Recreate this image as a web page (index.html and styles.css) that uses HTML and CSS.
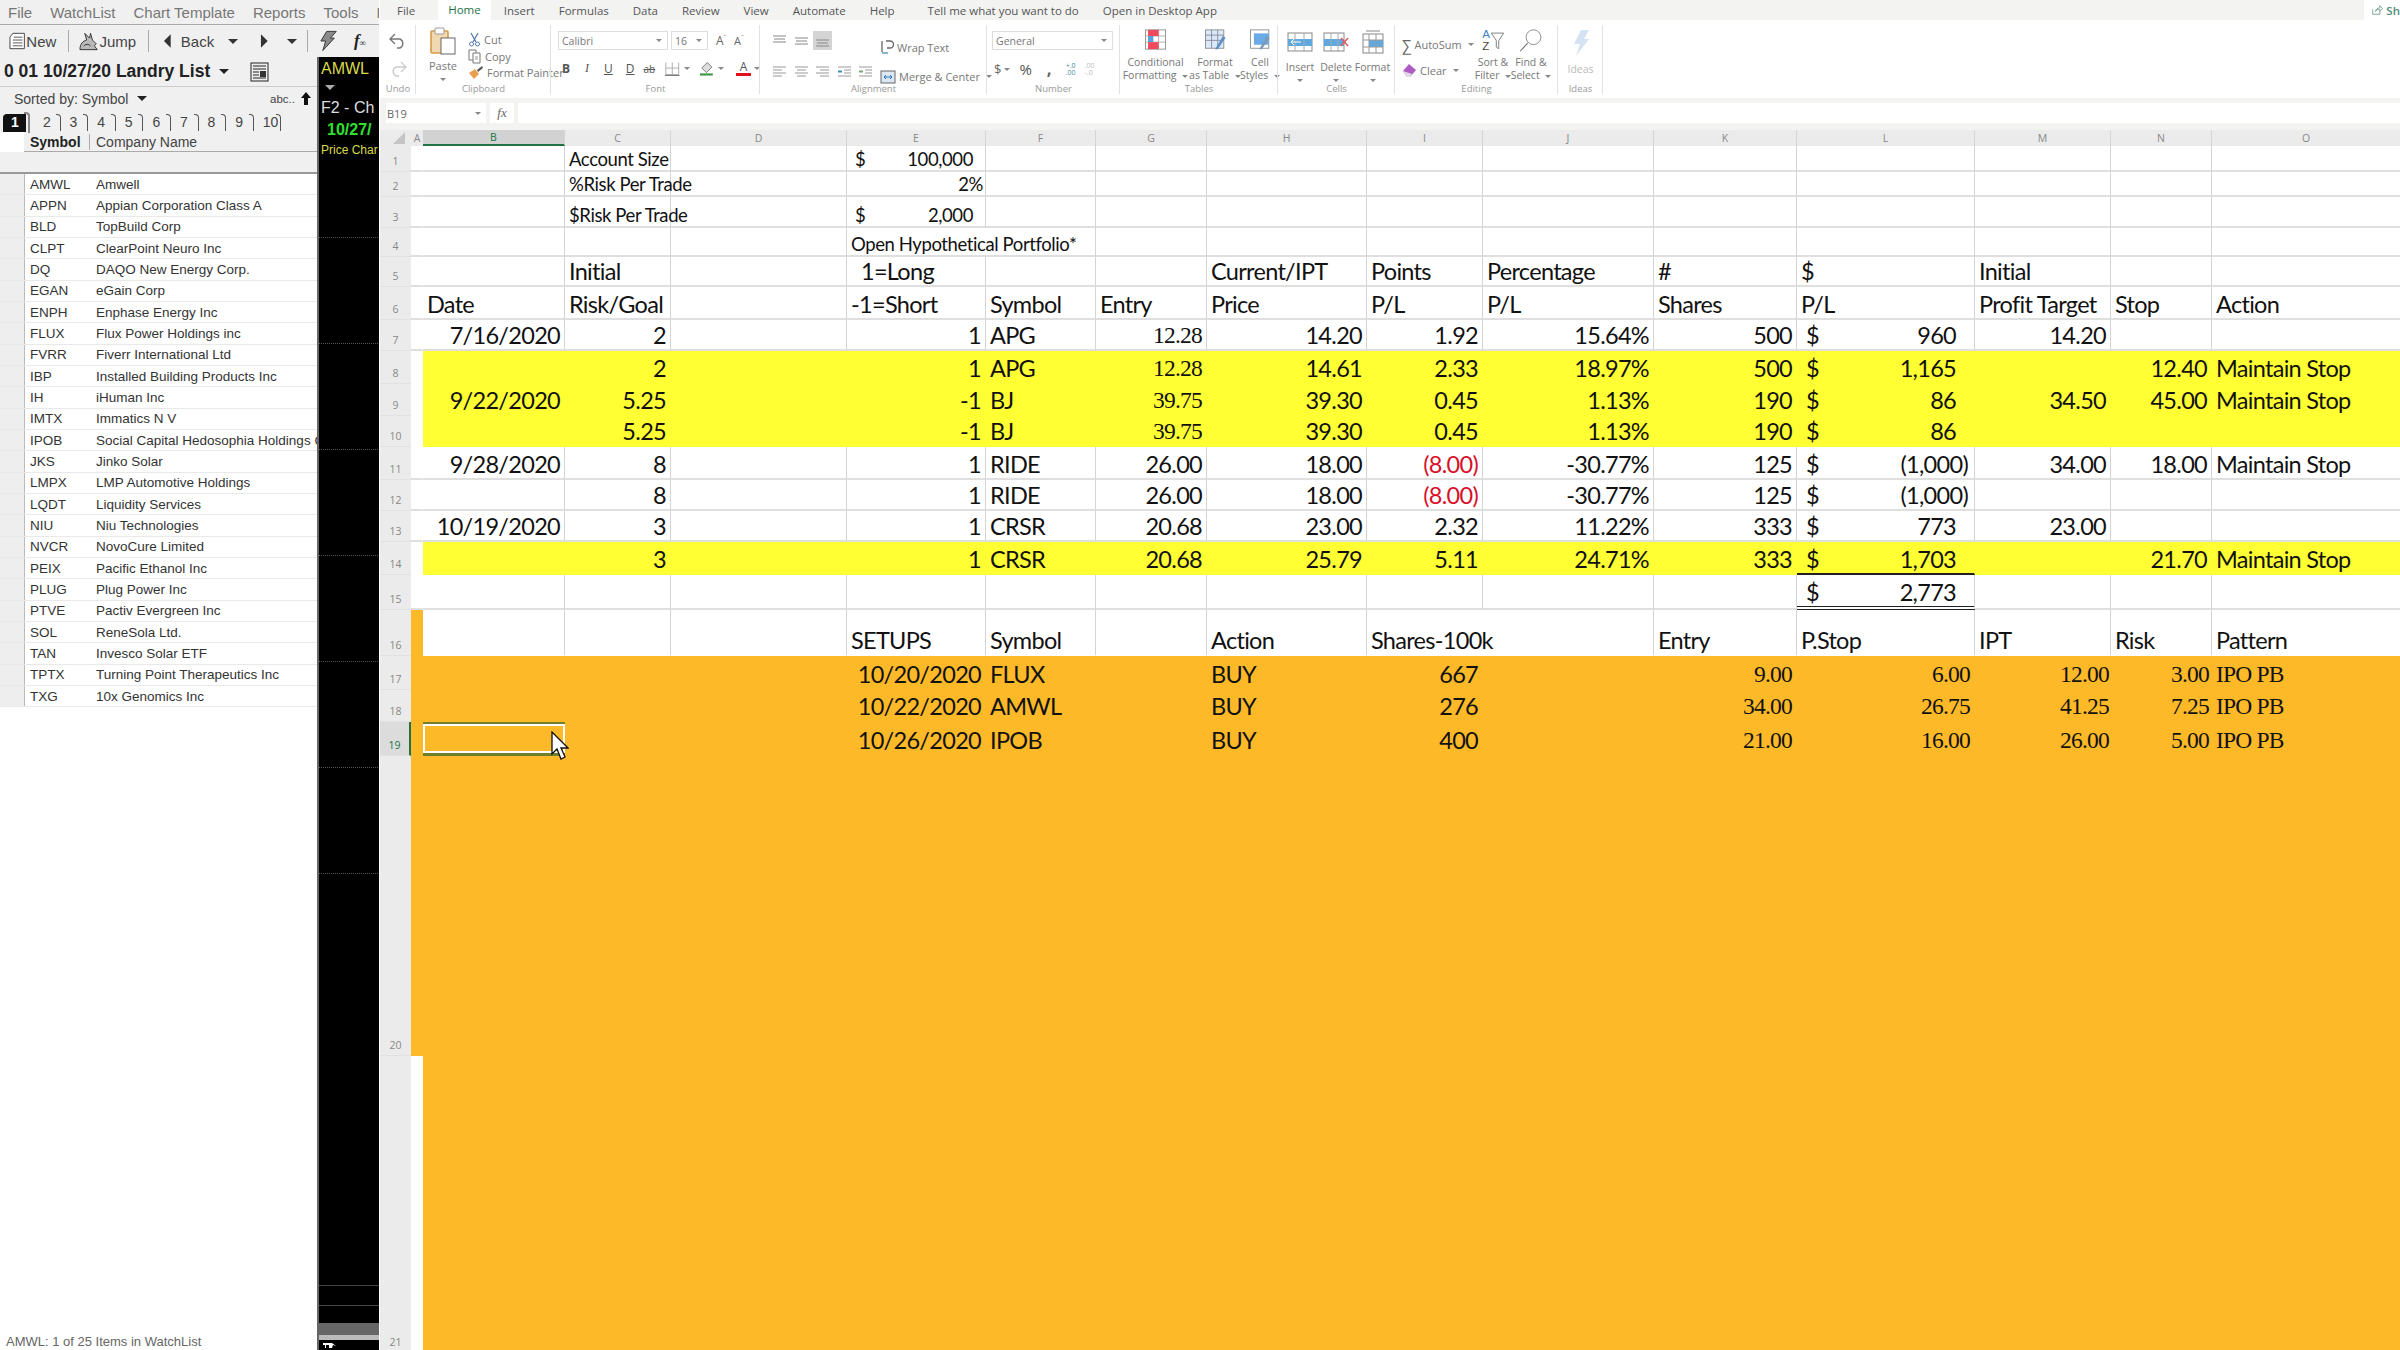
FILE: index.html
```html
<!DOCTYPE html>
<html lang="en">
<head>
  <meta charset="UTF-8">
  <title>Landry List - Portfolio</title>
  <link rel="stylesheet" href="styles.css">
</head>
<body>
<div class="screen">

  <!-- charting app on the left -->
  <div class="tc">
    <div class="tc-menu">
      <span class="m1">File</span><span class="m2">WatchList</span><span class="m3">Chart Template</span><span class="m4">Reports</span><span class="m5">Tools</span><span class="m6">Da</span>
    </div>
    <div class="tc-tools">
      <svg class="t-new" width="17" height="18" viewBox="0 0 17 18"><path d="M4 1h12v16H1V5z" fill="#fff" stroke="#444"/><path d="M5 5h9M4 8h10M4 11h10M4 14h10" stroke="#555"/></svg>
      <span class="t-label">New</span>
      <i class="t-sep sep-a"></i>
      <svg class="t-jump" width="20" height="20" viewBox="0 0 20 20"><path d="M1 19c0-6 3-9 7-10l-2-7 5 5 1-5 2 7 4 4-2 2 3 4z" fill="#b9b9b9" stroke="#333"/><path d="M5 15c2-2 5-2 7 0" fill="none" stroke="#333"/></svg>
      <span class="t-label">Jump</span>
      <i class="t-sep sep-b"></i>
      <svg class="t-back" width="9" height="16" viewBox="0 0 9 16"><path d="M8 1v14L1 8z" fill="#333"/></svg>
      <span class="t-label t-backlabel">Back</span>
      <span class="caret c-back"></span>
      <svg class="t-fwd" width="9" height="16" viewBox="0 0 9 16"><path d="M1 1v14l7-7z" fill="#333"/></svg>
      <span class="caret c-fwd"></span>
      <i class="t-sep sep-c"></i>
      <svg class="t-bolt" width="20" height="22" viewBox="0 0 20 22"><path d="M9 1h10l-6 7h4L5 21l3-10H3z" fill="#8a8a8a" stroke="#333"/></svg>
      <span class="t-fx"><b>f</b><small>∞</small></span>
      <i class="t-sep sep-d"></i>
    </div>
    <div class="tc-split">
      <div class="watch">
        <div class="watch-title">
          <span>0 01 10/27/20 Landry List</span>
          <span class="caret caret-dark"></span>
          <svg class="news" width="20" height="20" viewBox="0 0 20 20"><rect x="1" y="1" width="17" height="18" fill="#eee" stroke="#222"/><path d="M3 4h13M3 7h13M3 10h6M3 13h6M3 16h13" stroke="#222"/><rect x="10" y="9" width="6" height="6" fill="#333"/></svg>
        </div>
        <div class="watch-sort">
          <span>Sorted by: Symbol</span>
          <span class="caret caret-dark"></span>
          <span class="abc">abc..</span>
          <svg width="10" height="13" viewBox="0 0 10 13"><path d="M5 0l5 6H7v7H3V6H0z" fill="#111"/></svg>
        </div>
        <div class="watch-tabs">
          <span class="tab tab-on">1</span><span class="tab">2</span><span class="tab">3</span><span class="tab">4</span><span class="tab">5</span><span class="tab">6</span><span class="tab">7</span><span class="tab">8</span><span class="tab">9</span><span class="tab">10</span>
        </div>
        <div class="watch-head"><span class="wh-sym">Symbol</span><span class="wh-name">Company Name</span></div>
        <div class="watch-band"></div>
        <div class="watch-rows">
          <div class="w-row"><b>AMWL</b><span>Amwell</span></div>
          <div class="w-row"><b>APPN</b><span>Appian Corporation Class A</span></div>
          <div class="w-row"><b>BLD</b><span>TopBuild Corp</span></div>
          <div class="w-row"><b>CLPT</b><span>ClearPoint Neuro Inc</span></div>
          <div class="w-row"><b>DQ</b><span>DAQO New Energy Corp.</span></div>
          <div class="w-row"><b>EGAN</b><span>eGain Corp</span></div>
          <div class="w-row"><b>ENPH</b><span>Enphase Energy Inc</span></div>
          <div class="w-row"><b>FLUX</b><span>Flux Power Holdings inc</span></div>
          <div class="w-row"><b>FVRR</b><span>Fiverr International Ltd</span></div>
          <div class="w-row"><b>IBP</b><span>Installed Building Products Inc</span></div>
          <div class="w-row"><b>IH</b><span>iHuman Inc</span></div>
          <div class="w-row"><b>IMTX</b><span>Immatics N V</span></div>
          <div class="w-row"><b>IPOB</b><span>Social Capital Hedosophia Holdings Corp</span></div>
          <div class="w-row"><b>JKS</b><span>Jinko Solar</span></div>
          <div class="w-row"><b>LMPX</b><span>LMP Automotive Holdings</span></div>
          <div class="w-row"><b>LQDT</b><span>Liquidity Services</span></div>
          <div class="w-row"><b>NIU</b><span>Niu Technologies</span></div>
          <div class="w-row"><b>NVCR</b><span>NovoCure Limited</span></div>
          <div class="w-row"><b>PEIX</b><span>Pacific Ethanol Inc</span></div>
          <div class="w-row"><b>PLUG</b><span>Plug Power Inc</span></div>
          <div class="w-row"><b>PTVE</b><span>Pactiv Evergreen Inc</span></div>
          <div class="w-row"><b>SOL</b><span>ReneSola Ltd.</span></div>
          <div class="w-row"><b>TAN</b><span>Invesco Solar ETF</span></div>
          <div class="w-row"><b>TPTX</b><span>Turning Point Therapeutics Inc</span></div>
          <div class="w-row"><b>TXG</b><span>10x Genomics Inc</span></div>
        </div>
        <div class="watch-status">AMWL: 1 of 25 Items in WatchList</div>
      </div>
      <div class="chart">
        <div class="chart-info tick">
          <div class="c-sym">AMWL</div>
          <span class="c-tri"></span>
          <div class="c-f2">F2 - Ch</div>
          <div class="c-date">10/27/</div>
          <div class="c-price">Price Char</div>
        </div>
        <div class="tick"></div><div class="tick"></div><div class="tick"></div><div class="tick"></div><div class="tick"></div><div class="tick"></div>
        <div class="chart-fill"></div>
        <div class="chart-line"></div>
        <div class="chart-scroll"></div>
        <div class="chart-strip"></div>
        <svg class="chart-icon" width="16" height="8" viewBox="0 0 16 8"><path d="M1 1h9l4 3-3-1-1 3H7V3H4v3H3V3H1z" fill="#fff"/></svg>
      </div>
    </div>
  </div>

  <!-- excel online -->
  <div class="xl">
    <div class="xl-menu">
      <span class="x-tab x-file">File</span>
      <span class="x-tab x-home">Home</span>
      <span class="x-tab x-ins">Insert</span>
      <span class="x-tab x-form">Formulas</span>
      <span class="x-tab x-data">Data</span>
      <span class="x-tab x-rev">Review</span>
      <span class="x-tab x-view">View</span>
      <span class="x-tab x-auto">Automate</span>
      <span class="x-tab x-help">Help</span>
      <span class="x-tab x-tell">Tell me what you want to do</span>
      <span class="x-tab x-open">Open in Desktop App</span>
      <span class="x-share">
        <svg width="16" height="14" viewBox="0 0 16 14"><path d="M1 6v7h10V9M5 9c0-3 3-5 6-5V1l4 4-4 4V6c-3 0-5 1-6 3z" fill="none" stroke="#4f8a78"/></svg>
        <span>Sh</span>
      </span>
    </div>

    <div class="ribbon">
      <div class="grp g-undo">
        <div class="grp-body undo-body">
          <svg width="18" height="16" viewBox="0 0 18 16"><path d="M6 1L1 6l5 5M1 6h10a5 5 0 0 1 0 9H8" fill="none" stroke="#777" stroke-width="1.4"/></svg>
          <svg width="18" height="16" viewBox="0 0 18 16"><path d="M12 1l5 5-5 5M17 6H7a5 5 0 0 0 0 9h3" fill="none" stroke="#ccc" stroke-width="1.4"/></svg>
        </div>
        <div class="grp-label">Undo</div>
      </div>

      <div class="grp g-clip">
        <div class="grp-body clip-body">
          <div class="big-btn paste">
            <svg width="26" height="28" viewBox="0 0 26 28"><rect x="1" y="4" width="17" height="22" rx="1" fill="#f0d8b0" stroke="#d79a4a" stroke-width="1.6"/><rect x="5" y="1" width="9" height="6" rx="1" fill="#fff" stroke="#999"/><rect x="11" y="11" width="14" height="16" fill="#fff" stroke="#666"/></svg>
            <span>Paste</span>
            <span class="mini-caret"></span>
          </div>
          <div class="clip-list">
            <div class="clip-item"><svg width="13" height="15" viewBox="0 0 13 15"><path d="M3 1l5 9M10 1L5 10" stroke="#5a7da8" stroke-width="1.3"/><circle cx="3.5" cy="12" r="2" fill="none" stroke="#5a7da8"/><circle cx="9.5" cy="12" r="2" fill="none" stroke="#5a7da8"/></svg>Cut</div>
            <div class="clip-item"><svg width="14" height="15" viewBox="0 0 14 15"><path d="M1 1h7v10H1z" fill="#fff" stroke="#777"/><path d="M5 4h7v10H5z" fill="#fff" stroke="#777"/><path d="M7 8h3M7 10h3" stroke="#999"/></svg>Copy</div>
            <div class="clip-item"><svg width="16" height="15" viewBox="0 0 16 15"><path d="M1 8l6-4 4 5-5 5z" fill="#e9a04c"/><path d="M9 5l5-4 1 2-5 4z" fill="#555"/></svg>Format Painter</div>
          </div>
        </div>
        <div class="grp-label">Clipboard</div>
      </div>

      <div class="grp g-font">
        <div class="grp-body font-body">
          <div class="tool-row">
            <span class="sel-box sel-font">Calibri<i class="mini-caret"></i></span>
            <span class="sel-box sel-size">16<i class="mini-caret"></i></span>
            <span class="grow-a">A<sup>ˆ</sup></span>
            <span class="grow-a small-a">A<sup>ˇ</sup></span>
          </div>
          <div class="tool-row fmt-row">
            <b>B</b><i class="f-i">I</i><u>U</u><u class="f-d">D</u><s class="f-ab">ab</s>
            <svg width="18" height="16" viewBox="0 0 18 16"><path d="M2 1v13h14V1M9 1v13M2 7h14" fill="none" stroke="#aaa"/><path d="M1 15h16" stroke="#666"/></svg>
            <span class="mini-caret"></span>
            <svg width="18" height="17" viewBox="0 0 18 17"><path d="M3 8l6-6 5 5-6 6z" fill="#ddd" stroke="#777"/><path d="M1 15h14" stroke="#3d9a46" stroke-width="2.4"/></svg>
            <span class="mini-caret"></span>
            <span class="f-color">A</span>
            <span class="mini-caret"></span>
          </div>
        </div>
        <div class="grp-label">Font</div>
      </div>

      <div class="grp g-align">
        <div class="grp-body align-body">
          <div class="align-icons">
            <div class="tool-row a-row">
              <svg width="15" height="12" viewBox="0 0 15 12"><path d="M1 1h13M2 4h11M1 7h13" stroke="#888" stroke-width="1.2"/></svg>
              <svg width="15" height="12" viewBox="0 0 15 12"><path d="M1 3h13M2 6h11M1 9h13" stroke="#888" stroke-width="1.2"/></svg>
              <span class="a-on"><svg width="15" height="12" viewBox="0 0 15 12"><path d="M1 5h13M2 8h11M1 11h13" stroke="#888" stroke-width="1.2"/></svg></span>
            </div>
            <div class="tool-row a-row">
              <svg width="15" height="13" viewBox="0 0 15 13"><path d="M1 1h13M1 4h9M1 7h13M1 10h9" stroke="#999" stroke-width="1.2"/></svg>
              <svg width="15" height="13" viewBox="0 0 15 13"><path d="M1 1h13M3 4h9M1 7h13M3 10h9" stroke="#999" stroke-width="1.2"/></svg>
              <svg width="15" height="13" viewBox="0 0 15 13"><path d="M1 1h13M5 4h9M1 7h13M5 10h9" stroke="#999" stroke-width="1.2"/></svg>
              <svg width="15" height="13" viewBox="0 0 15 13"><path d="M1 1h13M7 4h7M7 7h7M1 10h13" stroke="#999"/><path d="M1 5.500h4" stroke="#3f8fb5" stroke-width="2"/></svg>
              <svg width="15" height="13" viewBox="0 0 15 13"><path d="M1 1h13M7 4h7M7 7h7M1 10h13" stroke="#999"/><path d="M1 5.500h4" stroke="#77a873" stroke-width="2"/></svg>
            </div>
          </div>
          <i class="a-sep"></i>
          <div class="wrap-list">
            <div class="clip-item"><svg width="14" height="17" viewBox="0 0 14 17"><path d="M2 2v11M6 2h4a3 3 0 0 1 0 7H7" fill="none" stroke="#666" stroke-width="1.3"/><path d="M2 14h6" stroke="#3f8fb5" stroke-width="1.3"/></svg>Wrap Text</div>
            <div class="clip-item"><svg width="16" height="14" viewBox="0 0 16 14"><rect x="1" y="1" width="14" height="12" fill="#dbe8f4" stroke="#666"/><path d="M4 7h8M4 7l2-2M4 7l2 2M12 7l-2-2M12 7l-2 2" stroke="#2a73ad"/></svg>Merge &amp; Center<i class="mini-caret"></i></div>
          </div>
        </div>
        <div class="grp-label">Alignment</div>
      </div>

      <div class="grp g-num">
        <div class="grp-body num-body">
          <span class="sel-box sel-gen">General<i class="mini-caret"></i></span>
          <div class="tool-row num-row">
            <span class="n-sym">$</span><span class="mini-caret"></span><span class="n-pct">%</span><b class="n-com">,</b>
            <span class="n-dec"><em>+.0</em><em>.00</em></span>
            <span class="n-dec n-off"><em>.00</em><em>-.0</em></span>
          </div>
        </div>
        <div class="grp-label">Number</div>
      </div>

      <div class="grp g-tables">
        <div class="grp-body big-row">
          <div class="big-btn b-cond">
            <svg width="25" height="24" viewBox="0 0 25 24"><rect x="1" y="1" width="23" height="22" fill="#fff" stroke="#888"/><path d="M1 8h23M1 15h23M8 1v22M16 1v22" stroke="#aaa"/><rect x="4" y="1" width="12" height="7" fill="#ee4a5e"/><rect x="4" y="8" width="6" height="7" fill="#5aa0e0"/><rect x="4" y="15" width="12" height="8" fill="#ee4a5e"/></svg>
            <span>Conditional</span><span>Formatting <i class="mini-caret"></i></span>
          </div>
          <div class="big-btn b-fat">
            <svg width="25" height="24" viewBox="0 0 25 24"><rect x="1" y="1" width="21" height="21" fill="#d9e9f7" stroke="#888"/><path d="M1 7h21M1 13h21M8 1v21M15 1v21" stroke="#889"/><path d="M12 23l9-15 3 2-9 13z" fill="#5b8fc4"/></svg>
            <span>Format</span><span>as Table <i class="mini-caret"></i></span>
          </div>
          <div class="big-btn b-cell">
            <svg width="25" height="24" viewBox="0 0 25 24"><rect x="1" y="1" width="21" height="21" fill="#fff" stroke="#888"/><rect x="5" y="5" width="17" height="13" fill="#6aaae6"/><path d="M11 23l9-15 3 2-9 13z" fill="#7c9ab8"/></svg>
            <span>Cell</span><span>Styles <i class="mini-caret"></i></span>
          </div>
        </div>
        <div class="grp-label">Tables</div>
      </div>

      <div class="grp g-cells">
        <div class="grp-body big-row">
          <div class="big-btn b-insert">
            <svg width="26" height="24" viewBox="0 0 26 24"><rect x="1" y="3" width="24" height="18" fill="#fff" stroke="#888"/><rect x="1" y="9" width="24" height="7" fill="#5fa8e0"/><path d="M8 3v18M17 3v18" stroke="#aaa"/><path d="M14 12H4l3-3M4 12l3 3" fill="none" stroke="#fff"/></svg>
            <span>Insert</span><i class="mini-caret"></i>
          </div>
          <div class="big-btn b-delete">
            <svg width="26" height="24" viewBox="0 0 26 24"><rect x="1" y="3" width="20" height="18" fill="#fff" stroke="#888"/><rect x="1" y="9" width="20" height="7" fill="#5fa8e0"/><path d="M8 3v18M15 3v18" stroke="#aaa"/><path d="M18 8l7 8M25 8l-7 8" stroke="#e25a5a" stroke-width="1.5"/></svg>
            <span>Delete</span><i class="mini-caret"></i>
          </div>
          <div class="big-btn b-format">
            <svg width="26" height="24" viewBox="0 0 26 24"><path d="M6 1h14" stroke="#888"/><rect x="3" y="4" width="20" height="19" fill="#fff" stroke="#888"/><rect x="9" y="10" width="14" height="7" fill="#5fa8e0"/><path d="M3 10h20M3 17h20M9 4v19M16 4v19" stroke="#999"/></svg>
            <span>Format</span><i class="mini-caret"></i>
          </div>
        </div>
        <div class="grp-label">Cells</div>
      </div>

      <div class="grp g-edit">
        <div class="grp-body edit-body">
          <div class="wrap-list edit-list">
            <div class="clip-item"><span class="sigma">∑</span>AutoSum<i class="mini-caret"></i></div>
            <div class="clip-item"><svg width="15" height="15" viewBox="0 0 15 15"><path d="M1 8l6-7 7 6-6 7H5z" fill="#b05bc4"/><path d="M1 8l4 6h3l2-3z" fill="#ddd"/></svg>Clear<i class="mini-caret"></i></div>
          </div>
          <div class="big-btn b-sort">
            <svg width="28" height="28" viewBox="0 0 28 28"><text x="1" y="11" class="az az-a">A</text><text x="1" y="25" class="az">Z</text><path d="M12 5h15l-6 9v10l-3-2v-8z" fill="none" stroke="#666"/></svg>
            <span>Sort &amp;</span><span>Filter <i class="mini-caret"></i></span>
          </div>
          <div class="big-btn b-find">
            <svg width="28" height="28" viewBox="0 0 28 28"><circle cx="17" cy="10" r="9" fill="none" stroke="#777"/><path d="M10 17L1 27" stroke="#777" stroke-width="1.3"/></svg>
            <span>Find &amp;</span><span>Select <i class="mini-caret"></i></span>
          </div>
        </div>
        <div class="grp-label">Editing</div>
      </div>

      <div class="grp g-ideas">
        <div class="grp-body big-row">
          <div class="big-btn b-ideas">
            <svg width="20" height="28" viewBox="0 0 20 28"><path d="M10 1h8l-5 9h5L5 27l4-12H3z" fill="#d4e2f2"/></svg>
            <span class="ideas-txt">Ideas</span>
          </div>
        </div>
        <div class="grp-label">Ideas</div>
      </div>
    </div>

    <div class="formula">
      <span class="name-box">B19<i class="mini-caret"></i></span>
      <span class="fx-box">fx</span>
      <span class="fx-input"></span>
    </div>

    <table class="sheet">
      <colgroup>
        <col class="w-rh"><col class="w-a"><col class="w-b"><col class="w-c"><col class="w-d"><col class="w-e"><col class="w-f"><col class="w-g"><col class="w-h"><col class="w-i"><col class="w-j"><col class="w-k"><col class="w-l"><col class="w-m"><col class="w-n"><col class="w-o">
      </colgroup>
      <tr class="r0">
        <th class="corner"><span class="tri"></span></th><th class="ch-a">A</th><th class="ch-sel">B</th><th>C</th><th>D</th><th>E</th><th>F</th><th>G</th><th>H</th><th>I</th><th>J</th><th>K</th><th>L</th><th>M</th><th>N</th><th>O</th>
      </tr>
      <tr class="r1 sm">
        <th>1</th><td></td><td></td><td>Account Size</td><td></td><td><div class="acct ac-e"><span>$</span><span>100,000</span></div></td><td></td><td></td><td></td><td></td><td></td><td></td><td></td><td></td><td></td><td></td>
      </tr>
      <tr class="r2 sm">
        <th>2</th><td></td><td></td><td>%Risk Per Trade</td><td></td><td class="num tight">2%</td><td></td><td></td><td></td><td></td><td></td><td></td><td></td><td></td><td></td><td></td>
      </tr>
      <tr class="r3 sm">
        <th>3</th><td></td><td></td><td>$Risk Per Trade</td><td></td><td><div class="acct ac-e"><span>$</span><span>2,000</span></div></td><td></td><td></td><td></td><td></td><td></td><td></td><td></td><td></td><td></td><td></td>
      </tr>
      <tr class="r4 sm">
        <th>4</th><td></td><td></td><td></td><td></td><td colspan="2">Open Hypothetical Portfolio*</td><td></td><td></td><td></td><td></td><td></td><td></td><td></td><td></td><td></td>
      </tr>
      <tr class="r5">
        <th>5</th><td></td><td></td><td>Initial</td><td></td><td class="ind">1=Long</td><td></td><td></td><td>Current/IPT</td><td>Points</td><td>Percentage</td><td>#</td><td>$</td><td>Initial</td><td></td><td></td>
      </tr>
      <tr class="r6">
        <th>6</th><td></td><td>Date</td><td>Risk/Goal</td><td></td><td>-1=Short</td><td>Symbol</td><td>Entry</td><td>Price</td><td>P/L</td><td>P/L</td><td>Shares</td><td>P/L</td><td>Profit Target</td><td>Stop</td><td>Action</td>
      </tr>
      <tr class="r7">
        <th>7</th><td></td><td class="num">7/16/2020</td><td class="num">2</td><td></td><td class="num">1</td><td>APG</td><td class="num serif">12.28</td><td class="num">14.20</td><td class="num">1.92</td><td class="num">15.64%</td><td class="num">500</td><td><div class="acct"><span>$</span><span>960</span></div></td><td class="num">14.20</td><td></td><td></td>
      </tr>
      <tr class="r8 yellow">
        <th>8</th><td class="blank"></td><td></td><td class="num">2</td><td></td><td class="num">1</td><td>APG</td><td class="num serif">12.28</td><td class="num">14.61</td><td class="num">2.33</td><td class="num">18.97%</td><td class="num">500</td><td><div class="acct"><span>$</span><span>1,165</span></div></td><td></td><td class="num">12.40</td><td>Maintain Stop</td>
      </tr>
      <tr class="r9 yellow">
        <th>9</th><td class="blank"></td><td class="num">9/22/2020</td><td class="num">5.25</td><td></td><td class="num">-1</td><td>BJ</td><td class="num serif">39.75</td><td class="num">39.30</td><td class="num">0.45</td><td class="num">1.13%</td><td class="num">190</td><td><div class="acct"><span>$</span><span>86</span></div></td><td class="num">34.50</td><td class="num">45.00</td><td>Maintain Stop</td>
      </tr>
      <tr class="r10 yellow">
        <th>10</th><td class="blank"></td><td></td><td class="num">5.25</td><td></td><td class="num">-1</td><td>BJ</td><td class="num serif">39.75</td><td class="num">39.30</td><td class="num">0.45</td><td class="num">1.13%</td><td class="num">190</td><td><div class="acct"><span>$</span><span>86</span></div></td><td></td><td></td><td></td>
      </tr>
      <tr class="r11">
        <th>11</th><td></td><td class="num">9/28/2020</td><td class="num">8</td><td></td><td class="num">1</td><td>RIDE</td><td class="num">26.00</td><td class="num">18.00</td><td class="num red">(8.00)</td><td class="num">-30.77%</td><td class="num">125</td><td><div class="acct ac-neg"><span>$</span><span>(1,000)</span></div></td><td class="num">34.00</td><td class="num">18.00</td><td>Maintain Stop</td>
      </tr>
      <tr class="r12">
        <th>12</th><td></td><td></td><td class="num">8</td><td></td><td class="num">1</td><td>RIDE</td><td class="num">26.00</td><td class="num">18.00</td><td class="num red">(8.00)</td><td class="num">-30.77%</td><td class="num">125</td><td><div class="acct ac-neg"><span>$</span><span>(1,000)</span></div></td><td></td><td></td><td></td>
      </tr>
      <tr class="r13">
        <th>13</th><td></td><td class="num">10/19/2020</td><td class="num">3</td><td></td><td class="num">1</td><td>CRSR</td><td class="num">20.68</td><td class="num">23.00</td><td class="num">2.32</td><td class="num">11.22%</td><td class="num">333</td><td><div class="acct"><span>$</span><span>773</span></div></td><td class="num">23.00</td><td></td><td></td>
      </tr>
      <tr class="r14 yellow">
        <th>14</th><td class="blank"></td><td></td><td class="num">3</td><td></td><td class="num">1</td><td>CRSR</td><td class="num">20.68</td><td class="num">25.79</td><td class="num">5.11</td><td class="num">24.71%</td><td class="num">333</td><td><div class="acct"><span>$</span><span>1,703</span></div></td><td></td><td class="num">21.70</td><td>Maintain Stop</td>
      </tr>
      <tr class="r15">
        <th>15</th><td></td><td></td><td></td><td></td><td></td><td></td><td></td><td></td><td></td><td></td><td></td><td class="total"><div class="acct"><span>$</span><span>2,773</span></div></td><td></td><td></td><td></td>
      </tr>
      <tr class="r16">
        <th>16</th><td class="orange-a"></td><td></td><td></td><td></td><td>SETUPS</td><td>Symbol</td><td></td><td>Action</td><td colspan="2">Shares-100k</td><td>Entry</td><td>P.Stop</td><td>IPT</td><td>Risk</td><td>Pattern</td>
      </tr>
      <tr class="r17 orange">
        <th>17</th><td></td><td></td><td></td><td></td><td class="num">10/20/2020</td><td>FLUX</td><td></td><td>BUY</td><td class="num">667</td><td></td><td class="num serif">9.00</td><td class="num serif">6.00</td><td class="num serif w-up">12.00</td><td class="num serif tight">3.00</td><td class="serif">IPO PB</td>
      </tr>
      <tr class="r18 orange">
        <th>18</th><td></td><td></td><td></td><td></td><td class="num">10/22/2020</td><td>AMWL</td><td></td><td>BUY</td><td class="num">276</td><td></td><td class="num serif">34.00</td><td class="num serif">26.75</td><td class="num serif w-up">41.25</td><td class="num serif tight">7.25</td><td class="serif">IPO PB</td>
      </tr>
      <tr class="r19 orange">
        <th class="rh-sel">19</th><td></td><td class="active-cell"><svg class="pointer" width="18" height="30" viewBox="0 0 18 30"><path d="M1 1v22l5-5 4 10 4-2-4-9h7z" fill="#fff" stroke="#111" stroke-width="1.3"/></svg></td><td></td><td></td><td class="num">10/26/2020</td><td>IPOB</td><td></td><td>BUY</td><td class="num">400</td><td></td><td class="num serif">21.00</td><td class="num serif">16.00</td><td class="num serif w-up">26.00</td><td class="num serif tight">5.00</td><td class="serif">IPO PB</td>
      </tr>
      <tr class="r20 orange">
        <th>20</th><td></td><td colspan="14"></td>
      </tr>
      <tr class="r21 orange">
        <th>21</th><td class="blank"></td><td colspan="14"></td>
      </tr>
    </table>
  </div>
</div>
</body>
</html>
```

FILE: styles.css
```css
* { box-sizing: border-box; }
html, body { margin: 0; padding: 0; background: #fff; }
body { font-family: "Liberation Sans", Arial, sans-serif; color: #333; }
i, em { font-style: normal; }

.screen { display: flex; width: 2400px; height: 1350px; overflow: hidden; }

/* left app */
.tc { width: 380px; height: 1350px; flex: none; display: flex; flex-direction: column; background: #f0f0f0; }
.tc-menu { height: 25px; display: flex; align-items: center; font-size: 15px; color: #777; border-bottom: 1px solid #aaa; overflow: hidden; white-space: nowrap; }
.m1 { margin-left: 8px; }
.m2 { margin-left: 18px; }
.m3 { margin-left: 18px; }
.m4 { margin-left: 18px; }
.m5 { margin-left: 18px; }
.m6 { margin-left: 18px; }

.tc-tools { height: 32px; display: flex; align-items: center; color: #444; font-size: 15px; overflow: hidden; }
.t-new { margin-left: 9px; }
.t-label { margin-left: 1px; }
.t-sep { width: 1px; height: 22px; background: #aaa; }
.sep-a { margin: 0 10px 0 12px; }
.sep-b { margin: 0 14px 0 12px; }
.t-backlabel { margin-left: 9px; }
.caret { width: 0; height: 0; border-left: 5px solid transparent; border-right: 5px solid transparent; border-top: 5px solid #333; }
.c-back { margin-left: 14px; }
.t-fwd { margin-left: 22px; }
.c-fwd { margin-left: 18px; }
.sep-c { margin: 0 10px; }
.t-fx { margin-left: 17px; font-family: "Liberation Serif", serif; font-size: 17px; font-style: italic; color: #222; }
.t-fx small { font-size: 9px; }
.sep-d { margin-left: 13px; }

.tc-split { flex: 1; display: flex; min-height: 0; }
.watch { width: 319px; flex: none; display: flex; flex-direction: column; background: #fff; border-right: 2px solid #666; overflow: hidden; }
.watch-title { height: 30px; display: flex; align-items: center; gap: 9px; padding-left: 4px; background: #f0f0f0; font-size: 17.500px; font-weight: bold; color: #222; white-space: nowrap; border-bottom: 1px solid #ccc; }
.news { margin-left: 12px; }
.caret-dark { border-top-color: #222; }
.watch-sort { height: 23px; display: flex; align-items: center; padding: 0 6px 0 14px; background: #f0f0f0; font-size: 14px; color: #444; }
.watch-sort .caret { margin-left: 9px; }
.abc { margin-left: auto; margin-right: 6px; font-size: 11.500px; }
.watch-tabs { height: 22px; display: flex; align-items: flex-end; padding-left: 3px; background: #f0f0f0; font-size: 14px; color: #444; }
.tab { width: 27.600px; height: 18px; padding-left: 12px; position: relative; white-space: nowrap; }
.tab::after { content: ""; position: absolute; right: -3px; top: 0; width: 4px; height: 16px; border-top: 1px solid #555; border-right: 1px solid #555; border-top-right-radius: 4px; }
.tab-on { width: 23px; padding-left: 8px; margin-right: 4px; background: #111; color: #fff; font-weight: bold; border-top-left-radius: 4px; }
.tab-on::after { right: -4px; top: -2px; height: 19px; width: 4px; border-color: #888; border-width: 2px; }
.tab:nth-child(2) { padding-left: 13px; }
.watch-head { height: 20px; margin-left: 24px; display: flex; align-items: center; background: #f0f0f0; font-size: 14px; color: #444; border-bottom: 1px solid #aaa; }
.wh-sym { width: 66px; padding-left: 6px; font-weight: bold; color: #222; border-right: 1px solid #aaa; }
.wh-name { padding-left: 6px; }
.watch-band { height: 22px; flex: none; background: #f0f0f0; border-bottom: 2px solid #999; }
.watch-rows { flex: 1; }
.w-row { height: 21.330px; display: flex; align-items: center; font-size: 13.500px; color: #333; white-space: nowrap; overflow: hidden; border-bottom: 1px solid #e9e9e9; }
.w-row b { width: 96px; padding-left: 30px; flex: none; font-weight: normal; background: linear-gradient(90deg, #eee 0 24px, #bbb 24px 25px, #fff 25px); height: 100%; display: flex; align-items: center; }
.watch-status { height: 16px; padding-left: 6px; font-size: 13px; line-height: 15px; color: #666; }

.chart { flex: 1; display: flex; flex-direction: column; background: #000; }
.tick { height: 106px; flex: none; border-bottom: 1px dotted #555; }
.chart-info { height: 181px; padding: 3px 0 0 2px; overflow: hidden; white-space: nowrap; }
.c-sym { font-size: 16px; color: #d9d94a; }
.c-tri { display: block; width: 0; margin: 7px 0 0 4px; border-left: 5px solid transparent; border-right: 5px solid transparent; border-top: 5px solid #aaa; }
.c-f2 { margin-top: 9px; font-size: 16px; color: #ddd; }
.c-date { margin-top: 4px; padding-left: 6px; font-size: 16px; font-weight: bold; color: #2ee02e; }
.c-price { margin-top: 4px; font-size: 12px; color: #d9d94a; }
.chart-fill { flex: 1; border-bottom: 1px solid #444; }
.chart-line { height: 20px; flex: none; border-bottom: 1px solid #444; margin-bottom: 17px; }
.chart-scroll { height: 12px; flex: none; background: #666; }
.chart-strip { height: 5px; flex: none; background: #bbb; }
.chart-icon { margin: 2px 0 0 3px; flex: none; }

/* excel */
.xl { flex: 1; min-width: 0; display: flex; flex-direction: column; background: #f3f3f2; font-family: "Open Sans", "Noto Sans", sans-serif; border-left: 1px solid #fff; margin-left: -1px; }
.xl-menu { height: 20px; flex: none; display: flex; align-items: center; font-size: 11.500px; color: #555; white-space: nowrap; }
.x-tab { flex: none; }
.x-file { margin-left: 17px; }
.x-home { margin-left: 23px; height: 20px; line-height: 20px; padding: 0 10px; background: #fff; color: #217346; }
.x-ins { margin-left: 13px; }
.x-form { margin-left: 24px; }
.x-data { margin-left: 24px; }
.x-rev { margin-left: 24px; }
.x-view { margin-left: 24px; }
.x-auto { margin-left: 24px; }
.x-help { margin-left: 24px; }
.x-tell { margin-left: 33px; }
.x-open { margin-left: 24px; }
.x-share { margin-left: auto; align-self: stretch; padding-left: 8px; background: #fff; display: flex; align-items: center; gap: 3px; width: 36px; overflow: hidden; color: #4f8a78; font-weight: 600; }

.ribbon { height: 78px; flex: none; display: flex; background: #fff; font-size: 11px; color: #777; white-space: nowrap; }
.grp { flex: none; display: flex; flex-direction: column; padding: 5px 0 2px; position: relative; }
.grp::after { content: ""; position: absolute; right: 0; top: 5px; bottom: 4px; width: 1px; background: #e2e2e2; }
.g-undo { width: 36px; }
.g-clip { width: 135px; }
.g-font { width: 209px; }
.g-align { width: 227px; }
.g-num { width: 133px; }
.g-tables { width: 158px; }
.g-cells { width: 117px; }
.g-edit { width: 163px; }
.g-ideas { width: 45px; }
.grp-body { flex: 1; display: flex; min-height: 0; }
.grp-label { height: 14px; flex: none; text-align: center; font-size: 9.500px; line-height: 14px; color: #999; }

.undo-body { flex-direction: column; align-items: center; gap: 12px; padding-top: 8px; }
.clip-body { padding: 2px 0 0 10px; gap: 8px; }
.big-btn { display: flex; flex-direction: column; align-items: center; line-height: 13px; flex: none; }
.big-btn svg { margin-bottom: 6px; height: 28px; }
.paste { width: 34px; }
.paste svg { margin-bottom: 4px; }
.mini-caret { display: inline-block; width: 0; height: 0; margin-left: 3px; vertical-align: middle; border-left: 3px solid transparent; border-right: 3px solid transparent; border-top: 3px solid #888; }
.paste .mini-caret { margin: 6px 0 0; }
.clip-list { display: flex; flex-direction: column; justify-content: space-between; padding: 5px 0 2px; }
.clip-item { display: flex; align-items: center; gap: 3px; }

.font-body { flex-direction: column; padding: 6px 0 0 7px; gap: 10px; }
.tool-row { display: flex; align-items: center; }
.sel-box { height: 19px; display: flex; align-items: center; justify-content: space-between; padding: 0 5px 0 3px; background: #fff; border: 1px solid #ddd; font-size: 10.500px; color: #777; }
.sel-font { width: 110px; }
.sel-size { width: 37px; margin-left: 3px; }
.grow-a { margin-left: 8px; font-size: 12px; color: #666; }
.grow-a sup { font-size: 8px; color: #c77; line-height: 0; }
.small-a { margin-left: 7px; font-size: 11px; }
.fmt-row { font-size: 12px; color: #555; padding-left: 4px; }
.fmt-row .f-i { margin-left: 15px; font-family: "Liberation Serif", serif; font-style: italic; }
.fmt-row u { margin-left: 15px; }
.fmt-row .f-d { margin-left: 13px; }
.fmt-row .f-ab { margin-left: 9px; font-size: 10px; }
.fmt-row svg { margin-left: 9px; }
.f-color { margin-left: 12px; width: 16px; text-align: center; border-bottom: 3px solid #e0101e; line-height: 12px; }

.align-body { padding: 6px 0 0 12px; }
.align-icons { display: flex; flex-direction: column; gap: 13px; width: 112px; }
.a-row { gap: 6.500px; height: 19px; }
.a-on { width: 19px; height: 19px; margin-left: -2px; background: #d4d4d4; display: flex; align-items: center; justify-content: center; }
.a-sep { width: 1px; height: 52px; background: #e2e2e2; }
.wrap-list { display: flex; flex-direction: column; padding: 8px 0 0 7px; gap: 13px; }

.num-body { flex-direction: column; padding: 6px 0 0 5px; gap: 9px; }
.sel-gen { width: 121px; }
.num-row { font-size: 12px; color: #666; padding-left: 2px; }
.n-sym { font-size: 13px; }
.n-pct { margin-left: 9px; font-size: 15px; color: #555; }
.n-com { margin-left: 15px; font-size: 17px; line-height: 10px; }
.n-dec { margin-left: 14px; display: flex; flex-direction: column; font-size: 7px; line-height: 7px; color: #4a8a9c; }
.n-off { color: #bbb; margin-left: 9px; }

.big-row { padding-top: 4px; }
.big-row .big-btn { font-size: 10.500px; color: #777; }
.b-cond { width: 65px; margin-left: 3px; }
.b-fat { width: 54px; }
.b-cell { width: 36px; }
.b-insert { width: 36px; margin-left: 4px; }
.b-delete { width: 36px; }
.b-format { width: 37px; }
.big-row .big-btn > .mini-caret { margin: 5px 0 0; }
.edit-body { padding-top: 4px; }
.edit-list { width: 79px; padding-left: 7px; font-size: 11px; flex: none; gap: 11px; }
.sigma { font-size: 15px; line-height: 14px; color: #666; }
.b-sort, .b-find { font-size: 10.500px; color: #777; width: 38px; }
.b-sort svg, .b-find svg { margin-bottom: 4px; }
.az { font-family: "Liberation Sans", sans-serif; font-size: 14px; fill: #444; }
.az-a { fill: #3b83c4; }
.b-ideas { width: 45px; }
.ideas-txt { color: #bbb; }

.formula { height: 20px; margin-top: 5px; flex: none; display: flex; font-size: 11px; color: #666; padding-left: 6px; }
.name-box { width: 100px; display: flex; align-items: center; justify-content: space-between; padding: 0 5px 0 1px; background: #fff; }
.fx-box { width: 24px; margin-left: 4px; background: #fff; text-align: center; line-height: 19px; font-family: "Liberation Serif", serif; font-style: italic; font-size: 13px; }
.fx-input { flex: 1; margin-left: 4px; background: #fff; }

/* sheet */
.sheet { margin-top: 7px; width: 2021px; table-layout: fixed; border-collapse: separate; border-spacing: 0; background: #fff; font-family: Lato, "Liberation Sans", sans-serif; font-size: 23.500px; color: #111; }
.w-rh { width: 31px; }
.w-a { width: 12px; }
.w-b { width: 142px; }
.w-c { width: 106px; }
.w-d { width: 176px; }
.w-e { width: 139px; }
.w-f { width: 110px; }
.w-g { width: 111px; }
.w-h { width: 160px; }
.w-i { width: 116px; }
.w-j { width: 171px; }
.w-k { width: 143px; }
.w-l { width: 178px; }
.w-m { width: 136px; }
.w-n { width: 101px; }
.w-o { width: 189px; }

.sheet th { padding: 0 0 3px; background: #ebebeb; font-family: "Open Sans", sans-serif; font-size: 10.500px; font-weight: normal; color: #888; text-align: center; vertical-align: bottom; border-bottom: 1px solid #e1e1e1; }
.sheet td { padding: 0 4px 0 4px; white-space: nowrap; vertical-align: bottom; line-height: 28px; border-right: 1px solid #d4d4d4; border-bottom: 2px solid #dfdfdf; letter-spacing: -0.7px; }
.sheet td:nth-child(2) { border-right-color: transparent; padding: 0; }

.r0 { height: 16px; }
.r0 th { padding: 0; vertical-align: middle; border-bottom: 0; border-right: 1px solid #d4d4d4; }
.r0 th.corner, .r0 th.ch-a { border-right: 0; }
.ch-sel { background: #d2d2d2 !important; color: #217346 !important; border-bottom: 2px solid #217346 !important; }
.tri { display: block; width: 0; margin-left: 13px; border-left: 12px solid transparent; border-bottom: 12px solid #c4c4c4; }
.r1 { height: 26px; }
.r2 { height: 25px; }
.r3 { height: 31px; }
.r4 { height: 29px; }
.r5 { height: 27px; }
.r6 { height: 33px; }
.r7 { height: 31px; }
.r8 { height: 33px; }
.r9 { height: 32px; }
.r10 { height: 31px; }
.r11 { height: 33px; }
.r12 { height: 31px; }
.r13 { height: 31px; }
.r14 { height: 33px; }
.r15 { height: 35px; }
.r16 { height: 46px; }
.r17 { height: 34px; }
.r18 { height: 32px; }
.r19 { height: 34px; }
.r20 { height: 300px; }
.r21 { height: 297px; }

.sm td { font-size: 18.500px; line-height: 22px; letter-spacing: -0.4px; }
.num { text-align: right; }
.tight { padding-right: 2px !important; }
.w-up { padding-right: 1px !important; }
.ind { padding-left: 14px !important; }
.serif { font-family: "Liberation Serif", serif; letter-spacing: -0.8px !important; }
.red { color: #d8102a; }
.acct { display: flex; justify-content: space-between; padding: 0 14px 0 5px; }
.ac-e { padding: 0 8px 0 4px; }
.ac-neg { padding-right: 2px; }

.yellow td { background: #ffff33; border-color: #ffff33; }
.orange td { background: #fdb927; border-color: #fdb927; }
.sheet tr td.blank { background: #fff; border-color: #fff; }
.sheet td.orange-a { background: #fdb927; border-color: #fdb927; }
.r16 td { border-bottom-color: #fff; }
.r14 td:nth-child(13) { border-bottom: 2px solid #222; }
.sheet td.total { border-bottom: 4px double #222; }
.rh-sel { background: #dcdcdc !important; color: #217346 !important; border-right: 2px solid #217346; }
.sheet td.active-cell { position: relative; border: 0; border-top: 2px solid #6f7f2b; border-bottom: 3px solid #6f7f2b; box-shadow: inset 0 0 0 2px #fff; }
.pointer { position: absolute; right: -4px; top: 7px; }
```
